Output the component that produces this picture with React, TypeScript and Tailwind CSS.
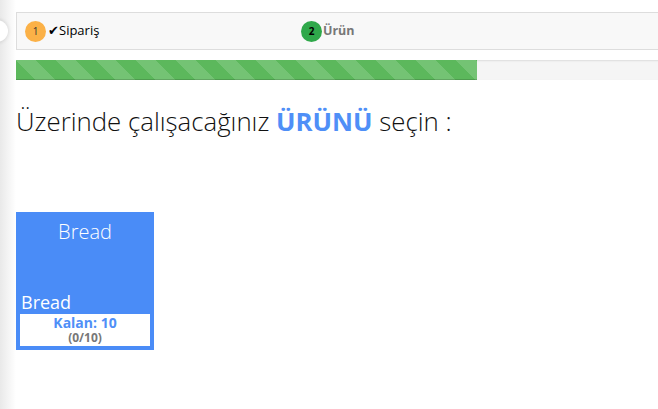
const App: React.FC = () => {
  return (
    <div className="relative flex h-[409px] w-[658px] overflow-hidden bg-white font-['Open_Sans',sans-serif]">
      <div className="w-4 shrink-0 bg-gradient-to-r from-[#e9e9e9] to-white" />
      <div className="absolute -left-[14px] top-[20px] h-[22px] w-[22px] rounded-full bg-white shadow-[0_0_4px_rgba(0,0,0,0.15)]" />

      <div className="flex min-w-[700px] flex-col pt-3">
        <div className="flex h-[38px] items-center border border-[#dddddd] bg-[#f8f8f8] pl-2">
          <div className="flex w-[276px] items-center">
            <span className="flex h-[21px] w-[21px] items-center justify-center rounded-full bg-[#fbb147] text-[10px] text-[#333]">
              1
            </span>
            <span className="ml-[2px] text-[13px] text-black">✔Sipariş</span>
          </div>
          <div className="flex items-center">
            <span className="flex h-[21px] w-[21px] items-center justify-center rounded-full bg-[#2fa84a] text-[10px] font-bold text-black">
              2
            </span>
            <span className="ml-[1px] text-[12.5px] font-bold text-[#777777]">Ürün</span>
          </div>
        </div>

        <div className="mt-[10px] h-5 bg-[#f5f5f5] shadow-[inset_0_1px_2px_rgba(0,0,0,0.1)]">
          <div className="h-full w-[461px] bg-[#5cb85c] bg-[linear-gradient(45deg,rgba(255,255,255,0.15)_25%,transparent_25%,transparent_50%,rgba(255,255,255,0.15)_50%,rgba(255,255,255,0.15)_75%,transparent_75%,transparent)] bg-[length:40px_40px] shadow-[inset_0_-1px_0_rgba(0,0,0,0.15)]" />
        </div>

        <h3 className="mt-[23px] text-[25.8px] font-light leading-[36px] text-[#111]">
          Üzerinde çalışacağınız <b className="font-bold text-[#4f8ff7]">ÜRÜNÜ</b> seçin :
        </h3>

        <div className="mt-[73px] flex h-[138px] w-[138px] flex-col bg-[#4a8cf7] p-1">
          <div className="mt-[2px] text-center text-[20px] font-light leading-[28px] text-white">Bread</div>
          <div className="mt-auto pl-[1px] text-[18px] leading-[24px] text-white">Bread</div>
          <div className="flex h-[32px] flex-col items-center justify-center bg-white">
            <span className="text-[14px] font-bold leading-[16px] text-[#4f8ff7]">Kalan: 10</span>
            <span className="text-[12px] font-bold leading-[14px] text-[#777777]">(0/10)</span>
          </div>
        </div>
      </div>
    </div>
  );
};

export default App;
